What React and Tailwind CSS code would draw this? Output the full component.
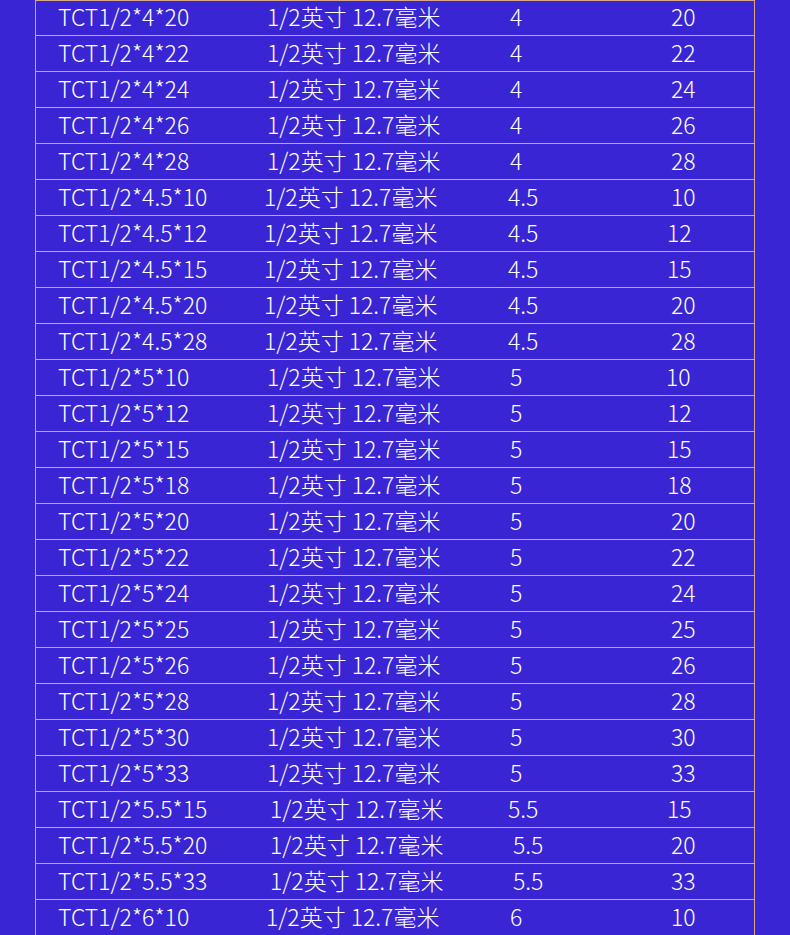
import React from "react";

// spec rows: model, shank, diameter, length + per-cell left padding
const rows = [
  ["TCT1/2*4*20", "4", "20", "pl-[5px]", "pl-[4px]", "pl-[9px]"],
  ["TCT1/2*4*22", "4", "22", "pl-[5px]", "pl-[4px]", "pl-[9px]"],
  ["TCT1/2*4*24", "4", "24", "pl-[5px]", "pl-[4px]", "pl-[9px]"],
  ["TCT1/2*4*26", "4", "26", "pl-[5px]", "pl-[4px]", "pl-[9px]"],
  ["TCT1/2*4*28", "4", "28", "pl-[5px]", "pl-[4px]", "pl-[9px]"],
  ["TCT1/2*4.5*10", "4.5", "10", "pl-[2px]", "pl-[2px]", "pl-[9px]"],
  ["TCT1/2*4.5*12", "4.5", "12", "pl-[2px]", "pl-[2px]", "pl-[5px]"],
  ["TCT1/2*4.5*15", "4.5", "15", "pl-[2px]", "pl-[2px]", "pl-[5px]"],
  ["TCT1/2*4.5*20", "4.5", "20", "pl-[2px]", "pl-[2px]", "pl-[9px]"],
  ["TCT1/2*4.5*28", "4.5", "28", "pl-[2px]", "pl-[2px]", "pl-[9px]"],
  ["TCT1/2*5*10", "5", "10", "pl-[5px]", "pl-[4px]", "pl-[4px]"],
  ["TCT1/2*5*12", "5", "12", "pl-[5px]", "pl-[4px]", "pl-[5px]"],
  ["TCT1/2*5*15", "5", "15", "pl-[5px]", "pl-[4px]", "pl-[5px]"],
  ["TCT1/2*5*18", "5", "18", "pl-[5px]", "pl-[4px]", "pl-[5px]"],
  ["TCT1/2*5*20", "5", "20", "pl-[5px]", "pl-[4px]", "pl-[9px]"],
  ["TCT1/2*5*22", "5", "22", "pl-[5px]", "pl-[4px]", "pl-[9px]"],
  ["TCT1/2*5*24", "5", "24", "pl-[5px]", "pl-[4px]", "pl-[9px]"],
  ["TCT1/2*5*25", "5", "25", "pl-[5px]", "pl-[4px]", "pl-[9px]"],
  ["TCT1/2*5*26", "5", "26", "pl-[5px]", "pl-[4px]", "pl-[9px]"],
  ["TCT1/2*5*28", "5", "28", "pl-[5px]", "pl-[4px]", "pl-[9px]"],
  ["TCT1/2*5*30", "5", "30", "pl-[5px]", "pl-[4px]", "pl-[9px]"],
  ["TCT1/2*5*33", "5", "33", "pl-[5px]", "pl-[4px]", "pl-[9px]"],
  ["TCT1/2*5.5*15", "5.5", "15", "pl-[8px]", "pl-[2px]", "pl-[5px]"],
  ["TCT1/2*5.5*20", "5.5", "20", "pl-[8px]", "pl-[7px]", "pl-[9px]"],
  ["TCT1/2*5.5*33", "5.5", "33", "pl-[8px]", "pl-[7px]", "pl-[9px]"],
  ["TCT1/2*6*10", "6", "10", "pl-[4px]", "pl-[4px]", "pl-[9px]"],
];

const App = () => {
  return (
    <div
      className="h-[935px] overflow-hidden bg-[#3a25d4] text-white"
      style={{ fontFamily: '"Noto Sans CJK SC", "Noto Sans", sans-serif' }}
    >
      <div className="ml-[35px] w-[720px] border-x border-t border-[#d8a888]">
        {rows.map(([model, d, l, p2, p3, p4], i) => (
          <div
            key={model}
            className={
              "flex items-center border-b border-[#d8a888] pb-[3px] text-[23px] font-light leading-none " +
              (i === 0 ? "h-[35px]" : "h-9")
            }
          >
            <span className="w-[226px] shrink-0 pl-[22px]">{model}</span>
            <span className={"w-[244px] shrink-0 " + p2}>1/2英寸 12.7毫米</span>
            <span className={"w-[156px] shrink-0 " + p3}>{d}</span>
            <span className={"flex-1 " + p4}>{l}</span>
          </div>
        ))}
      </div>
    </div>
  );
};

export default App;
